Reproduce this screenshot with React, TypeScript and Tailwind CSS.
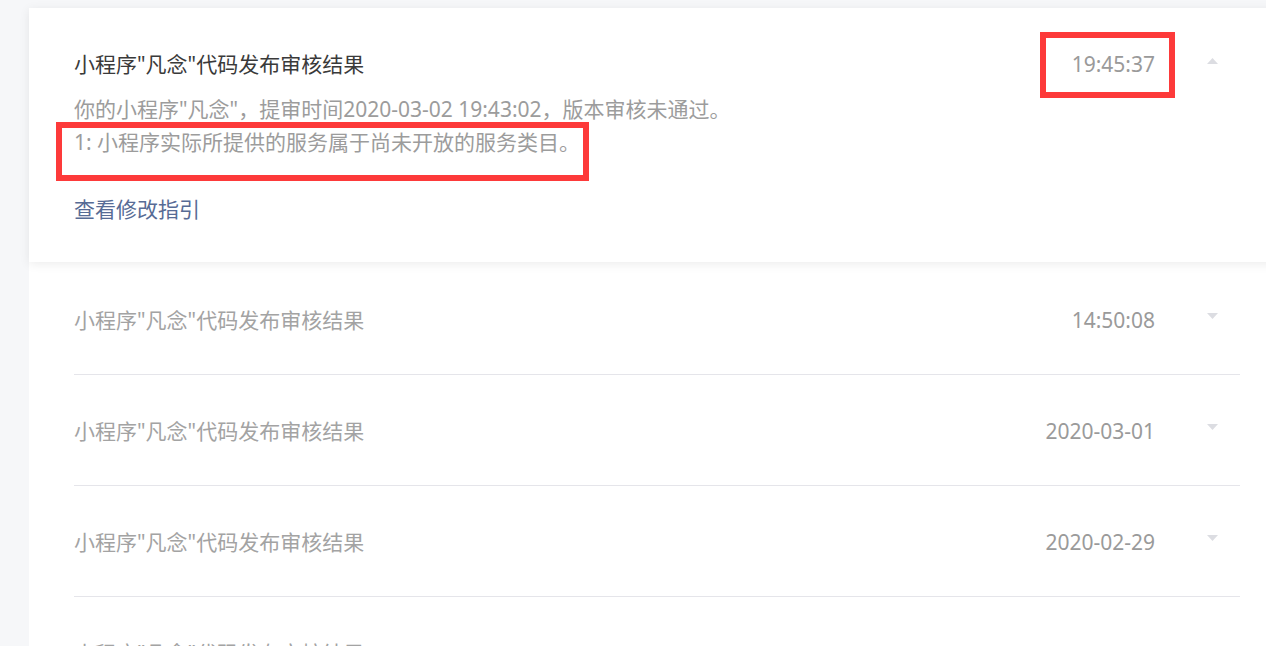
import { ReactNode } from "react";

const FONT = {
  fontFamily: '"Noto Sans", "Noto Sans CJK SC", sans-serif',
};

const rows = [
  { title: '小程序"凡念"代码发布审核结果', time: "14:50:08" },
  { title: '小程序"凡念"代码发布审核结果', time: "2020-03-01" },
  { title: '小程序"凡念"代码发布审核结果', time: "2020-02-29" },
  { title: '小程序"凡念"代码发布审核结果', time: "" },
];

function Caret({ up }: { up?: boolean }) {
  return (
    <svg width="11" height="6" viewBox="0 0 11 6" className="shrink-0">
      {up ? (
        <path d="M0 6 L5.5 0 L11 6 Z" fill="#dcdde2" />
      ) : (
        <path d="M0 0 L5.5 6 L11 0 Z" fill="#dcdde2" />
      )}
    </svg>
  );
}

function Mark({ className, children }: { className: string; children?: ReactNode }) {
  return (
    <div className={`pointer-events-none absolute z-20 border-[6px] border-[#fd3a3a] ${className}`}>
      {children}
    </div>
  );
}

export default function App() {
  return (
    <div
      className="relative h-[646px] overflow-hidden bg-[#f6f7f9] pt-[8px] pl-[29px]"
      style={FONT}
    >
      <div className="w-[1260px] bg-white">
        {/* Expanded message */}
        <div className="relative z-10 bg-white pl-[45px] pr-[49px] pt-[40px] pb-[36px] shadow-[0_2px_10px_rgba(0,0,0,0.08)]">
          <div className="flex items-center">
            <div className="flex-1 text-[21px] leading-[32px] text-[#3a3a3a]">
              小程序"凡念"代码发布审核结果
            </div>
            <div className="text-[21px] leading-[32px] text-[#9a9a9a]">19:45:37</div>
            <div className="ml-[52px] mr-[22px] mb-[6px]">
              <Caret up />
            </div>
          </div>
          <div className="mt-[13px] text-[21px] leading-[33px] text-[#9c9c9c]">
            <p>你的小程序"凡念"，提审时间2020-03-02 19:43:02，版本审核未通过。</p>
            <p>1: 小程序实际所提供的服务属于尚未开放的服务类目。</p>
          </div>
          <div className="mt-[34px] text-[21px] leading-[33px] text-[#576b95]">查看修改指引</div>
        </div>

        {/* Collapsed messages */}
        <div className="mt-[2px] pl-[45px] pr-[49px]">
          {rows.map((row, i) => (
            <div
              key={i}
              className="flex items-center border-b border-[#e5e5ea] pt-[40px] pb-[38px]"
            >
              <div className="flex-1 text-[21px] leading-[32px] text-[#a3a3a3]">{row.title}</div>
              <div className="text-[21px] leading-[32px] text-[#9a9a9a]">{row.time}</div>
              <div className="ml-[52px] mr-[22px] mb-[8px]">
                <Caret />
              </div>
            </div>
          ))}
        </div>
      </div>

      {/* annotation boxes */}
      <Mark className="left-[1040px] top-[32px] h-[66px] w-[135px]" />
      <Mark className="left-[56px] top-[122px] h-[59px] w-[533px]" />
    </div>
  );
}
